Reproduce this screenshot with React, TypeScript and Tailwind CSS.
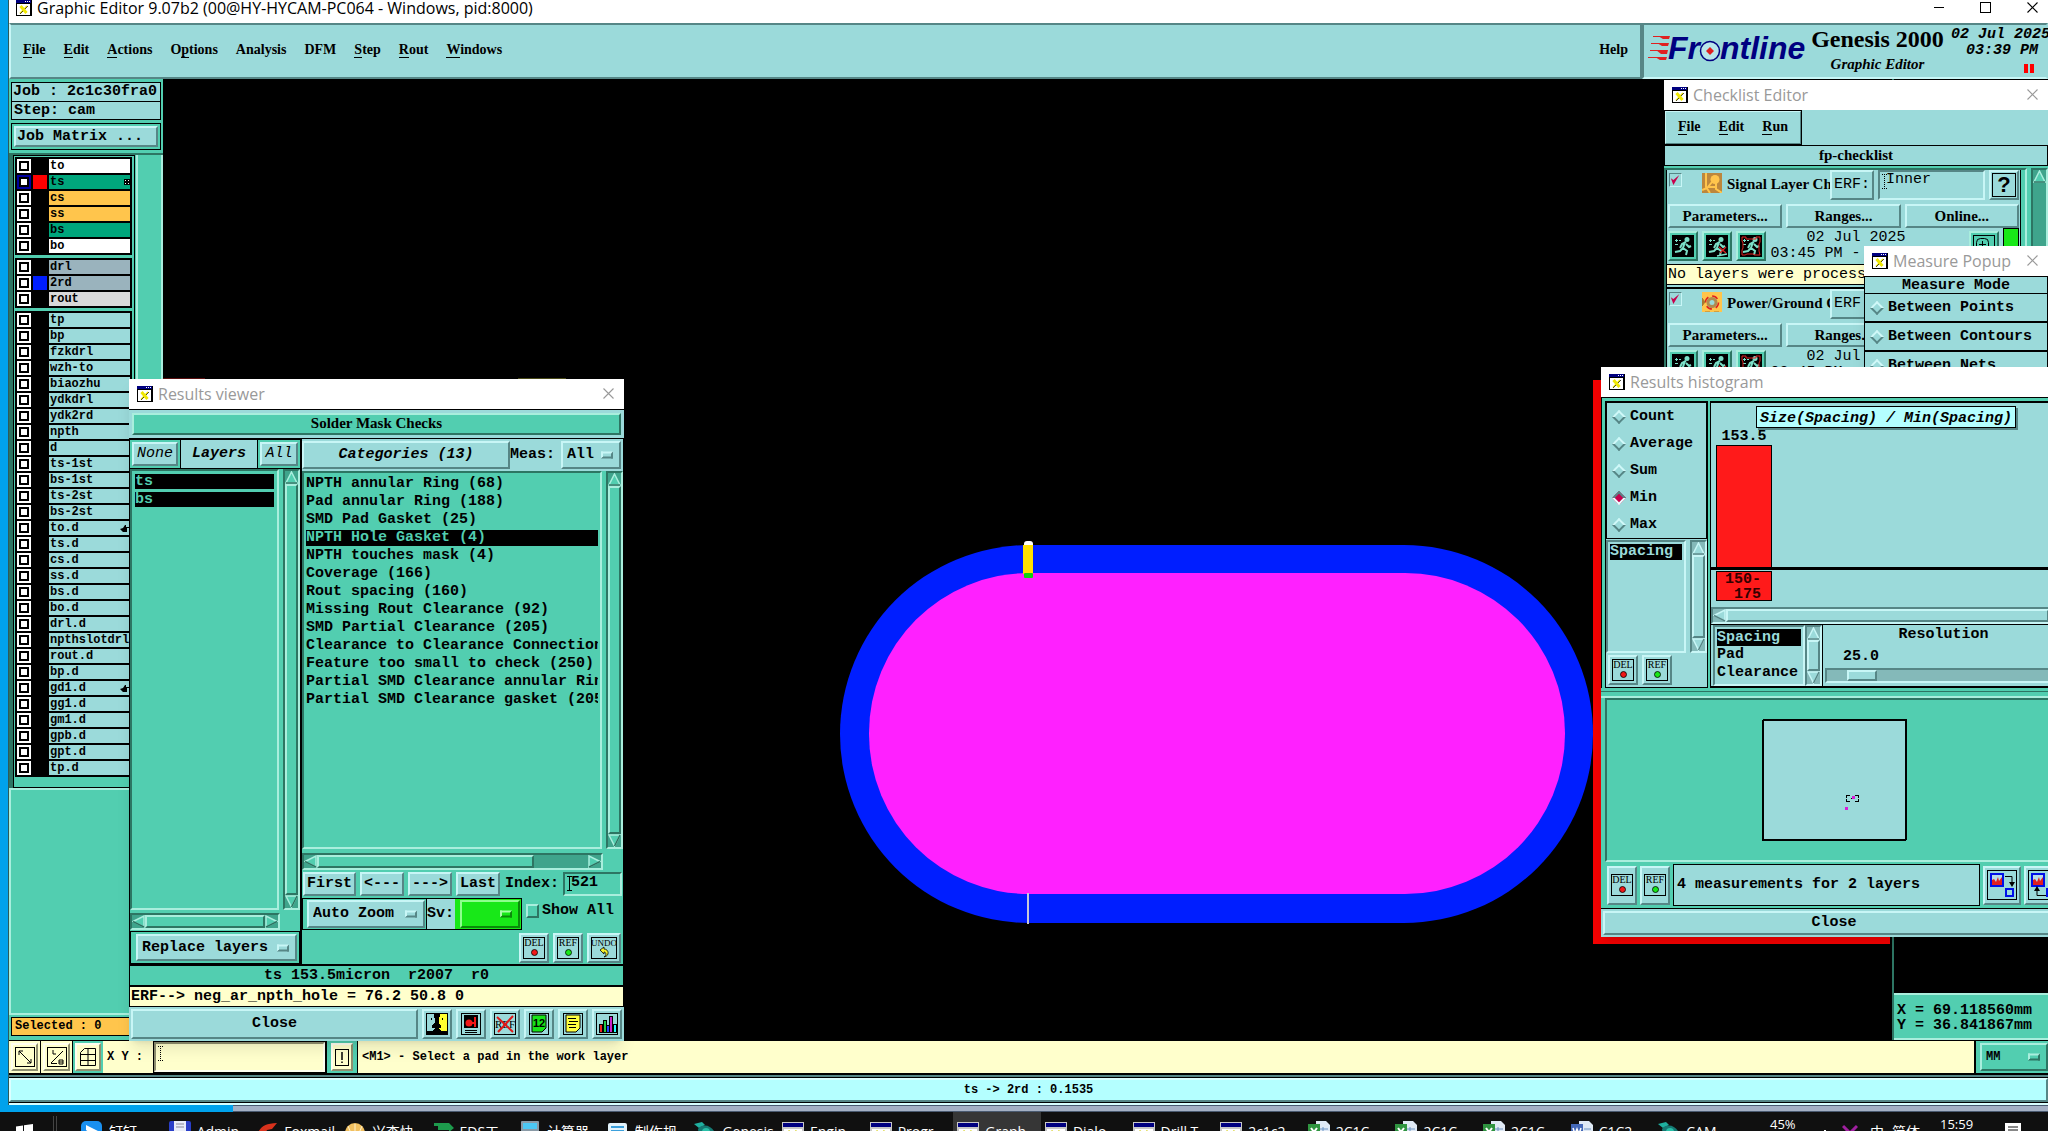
import React, { useState } from 'react';

const MONO = "font-['Liberation_Mono',monospace]";
const SERIF = "font-['Liberation_Serif',serif]";
const SANS = "font-['Open_Sans','Noto_Sans_CJK_SC',sans-serif]";

const raised = 'border-2 border-t-[#c8f6f6] border-l-[#c8f6f6] border-r-[#568686] border-b-[#568686] bg-[#9bdada]';
const sunken = 'border-2 border-t-[#568686] border-l-[#568686] border-r-[#c8f6f6] border-b-[#c8f6f6]';
const raisedTeal = 'border-2 border-t-[#a9eedd] border-l-[#a9eedd] border-r-[#2d7563] border-b-[#2d7563] bg-[#52ceb0]';
const sunkenTeal = 'border-2 border-t-[#2d7563] border-l-[#2d7563] border-r-[#a9eedd] border-b-[#a9eedd] bg-[#52ceb0]';
const raisedCream = 'border-2 border-t-[#fffff0] border-l-[#fffff0] border-r-[#8f8f70] border-b-[#8f8f70] bg-[#ffffcc]';

type Layer = { name: string; bg: string; swatch?: string; active?: boolean; mark?: 'grid' | 'hand' };

const AQUA = 'bg-[#9bdada]';

const boardLayers: Layer[] = [
  { name: 'to', bg: 'bg-white' },
  { name: 'ts', bg: 'bg-[#00a67c]', swatch: 'bg-[#ff0000]', active: true, mark: 'grid' },
  { name: 'cs', bg: 'bg-[#ffc54c]' },
  { name: 'ss', bg: 'bg-[#ffc54c]' },
  { name: 'bs', bg: 'bg-[#00a67c]' },
  { name: 'bo', bg: 'bg-white' },
];

const drillLayers: Layer[] = [
  { name: 'drl', bg: 'bg-[#9ab3bd]' },
  { name: '2rd', bg: 'bg-[#9ab3bd]', swatch: 'bg-[#001eff]' },
  { name: 'rout', bg: 'bg-[#d9d9d9]' },
];

const miscLayers: Layer[] = [
  'tp', 'bp', 'fzkdrl', 'wzh-to', 'biaozhu', 'ydkdrl', 'ydk2rd', 'npth', 'd', 'ts-1st', 'bs-1st', 'ts-2st', 'bs-2st',
  'to.d', 'ts.d', 'cs.d', 'ss.d', 'bs.d', 'bo.d', 'drl.d', 'npthslotdrl', 'rout.d', 'bp.d', 'gd1.d', 'gg1.d', 'gm1.d',
  'gpb.d', 'gpt.d', 'tp.d',
].map((name) => ({ name, bg: AQUA, mark: name === 'to.d' || name === 'gd1.d' ? 'hand' : undefined }));

const categories = [
  'NPTH annular Ring (68)',
  'Pad annular Ring (188)',
  'SMD Pad Gasket (25)',
  'NPTH Hole Gasket (4)',
  'NPTH touches mask (4)',
  'Coverage (166)',
  'Rout spacing (160)',
  'Missing Rout Clearance (92)',
  'SMD Partial Clearance (205)',
  'Clearance to Clearance Connection',
  'Feature too small to check (250)',
  'Partial SMD Clearance annular Ring',
  'Partial SMD Clearance gasket (205)',
];

/* ---------- icons ---------- */

const XIcon = () => (
  <svg width="16" height="16" viewBox="0 0 16 16" className="shrink-0">
    <rect width="16" height="16" fill="#000" />
    <rect x="1" y="4" width="13" height="11" fill="#fff" />
    <rect x="0" y="0" width="15" height="3" fill="#000080" />
    <rect x="9" y="1" width="1" height="1" fill="#fff" />
    <rect x="11" y="1" width="1" height="1" fill="#fff" />
    <rect x="13" y="1" width="1" height="1" fill="#fff" />
    <path d="M4.500 6l6 7" stroke="#f0e800" strokeWidth="3" />
    <path d="M11 6l-7 7.500" stroke="#f0e800" strokeWidth="1.500" />
    <path d="M12 6l-3 3M7 11l-3 3" stroke="#222" strokeWidth="0.800" />
  </svg>
);

const CloseX = ({ color = '#999' }: { color?: string }) => (
  <svg width="11" height="11" viewBox="0 0 11 11">
    <path d="M0.5 0.5l10 10M10.5 0.5l-10 10" stroke={color} strokeWidth="1.1" />
  </svg>
);

const StampIcon = ({ label, color }: { label: string; color: string }) => (
  <svg width="22" height="22" viewBox="0 0 22 22">
    <rect x="0.5" y="0.5" width="21" height="21" fill="none" stroke="#000" />
    <text x="11" y="9" textAnchor="middle" fontFamily="Liberation Serif" fontWeight="normal" fontSize="10" fill="#000">{label}</text>
    <circle cx="11.5" cy="15.5" r="3" fill={color} stroke="#000" strokeWidth="0.8" />
  </svg>
);

const UndoIcon = () => (
  <svg width="26" height="22" viewBox="0 0 26 22">
    <rect x="0.5" y="0.5" width="25" height="21" fill="none" stroke="#000" />
    <text x="13" y="9" textAnchor="middle" fontFamily="Liberation Serif" fontSize="9" fill="#000">UNDO</text>
    <path d="M9 13l4-3v2c5 0 6 7 0 8c3-2 2-5 0-5v2z" fill="#f4ee2a" stroke="#000" strokeWidth="0.8" />
  </svg>
);

const FaceIcon = () => (
  <svg width="22" height="22" viewBox="0 0 22 22" shapeRendering="crispEdges">
    <rect x="0.5" y="0.5" width="21" height="21" fill="#9bdada" stroke="#000" />
    <rect x="12" y="1" width="9" height="20" fill="#ffff30" />
    <path d="M8 0h7l-2 6v5l2 2v2h-2l2 3h6v3H1v-3h6l2-3H6v-2l3-4z" fill="#000" />
    <rect x="5" y="5" width="1" height="2" fill="#000" />
    <rect x="16" y="5" width="1" height="2" fill="#000" />
  </svg>
);

const BombIcon = () => (
  <svg width="20" height="22" viewBox="0 0 20 22">
    <rect x="0.5" y="0.5" width="19" height="21" fill="#9bdada" stroke="#000" />
    <rect x="3" y="2" width="14" height="13" fill="#000" />
    <circle cx="8" cy="10" r="3.5" fill="#f01818" />
    <path d="M8 10h6M14 4v10" stroke="#f01818" strokeWidth="2" />
    <path d="M4 17.5h12M4 19.5h12" stroke="#000" />
  </svg>
);

const NoRefIcon = () => (
  <svg width="22" height="22" viewBox="0 0 22 22">
    <rect x="0.5" y="0.5" width="21" height="21" fill="none" stroke="#000" />
    <text x="11" y="15" textAnchor="middle" fontFamily="Liberation Serif" fontSize="11" fill="#000">REF</text>
    <path d="M3 4l16 15M19 3L4 19" stroke="#e01818" strokeWidth="2" />
  </svg>
);

const PagesIcon = () => (
  <svg width="20" height="22" viewBox="0 0 20 22">
    <rect x="0.5" y="0.5" width="19" height="21" fill="#9bdada" stroke="#000" />
    <path d="M3 2h14v13l-4 4H3z" fill="#18e418" stroke="#000" />
    <text x="10" y="14" textAnchor="middle" fontFamily="Liberation Sans" fontWeight="bold" fontSize="11" fill="#000">12</text>
  </svg>
);

const NoteIcon = () => (
  <svg width="20" height="22" viewBox="0 0 20 22">
    <rect x="0.5" y="0.5" width="19" height="21" fill="#9bdada" stroke="#000" />
    <path d="M3 2h14v13l-4 4H3z" fill="#ffff40" stroke="#000" />
    <path d="M5 5.500h8M6 8.500h9M5 11.500h8M6 14.500h7" stroke="#000" />
  </svg>
);

const BarsIcon = () => (
  <svg width="22" height="22" viewBox="0 0 22 22" shapeRendering="crispEdges">
    <rect x="0.5" y="0.5" width="21" height="21" fill="#9bdada" stroke="#000" />
    <rect x="3" y="11" width="3" height="8" fill="#e22" stroke="#000" />
    <rect x="7" y="7" width="3" height="12" fill="#2c4" stroke="#000" />
    <rect x="10" y="12" width="3" height="7" fill="#24f" stroke="#000" />
    <rect x="13" y="3" width="3" height="16" fill="#c2c" stroke="#000" />
    <rect x="17" y="11" width="3" height="8" fill="#2ff" stroke="#000" />
  </svg>
);

const RunnerIcon = ({ variant }: { variant: 'plain' | 'flag' | 'frame' }) => (
  <svg width="22" height="22" viewBox="0 0 22 22">
    <rect width="22" height="22" fill="#000" />
    <circle cx="15" cy="4.500" r="2.500" fill="#7be0c8" />
    <path d="M14 7l-4 2-2 4M13 7l-2 6 4 3-1 4M11 13l-3 3-5 1M14 9l3 3 2-1" stroke="#7be0c8" strokeWidth="2" fill="none" />
    <path d="M3 5.500h3M7 5.500h2M4.500 4v3M3 9.500h3" stroke="#7be0c8" />
    {variant === 'flag' && <path d="M13 12l7 6M20 12l-6 6" stroke="#e02020" strokeWidth="1.200" />}
    {variant === 'flag' && <path d="M11 21l10-2" stroke="#7be0c8" strokeWidth="1.500" />}
    {variant === 'frame' && <path d="M2 2h4v2h10V2h4v5l-1 2v7l1 4h-5l-2-1H7l-2 1H2v-5l1-2V8L2 6z" stroke="#e02020" fill="none" />}
  </svg>
);

const SignalIcon = () => (
  <svg width="20" height="20" viewBox="0 0 20 20" className="shrink-0">
    <rect width="20" height="20" fill="#bd873c" />
    <circle cx="13" cy="6.500" r="4.500" fill="#ffc54c" />
    <path d="M4 0v14l4 6M10 9l-4 5h8M14 10v6l6 4M0 17l5-2" stroke="#ffc54c" strokeWidth="2" fill="none" />
  </svg>
);

const PowerIcon = () => (
  <svg width="20" height="20" viewBox="0 0 20 20" className="shrink-0">
    <rect width="20" height="20" fill="#ffc54c" />
    <circle cx="10" cy="10.500" r="6.500" fill="none" stroke="#e02020" strokeWidth="1.500" strokeDasharray="6 4" />
    <circle cx="10" cy="10.500" r="4" fill="#9bdada" stroke="#b08c50" strokeWidth="3" />
    <path d="M0 6l3 4-3 4zM3 20h5M12 20h5" stroke="#a8782f" fill="#a8782f" />
  </svg>
);

const FrontlineLogo = () => (
  <svg width="160" height="30" viewBox="0 0 160 30" className="shrink-0">
    <path d="M10 3h12l-1 3h-6zM9 10h12l-1 3h-6zM8 17h12l-1 4h-6zM7 24h12l-1 3h-6z" fill="#e02020" />
    <path d="M5 3.500h16M3 10.500h17M2 17.500h17M0 24.500h18" stroke="#e02020" />
    <text x="20" y="26" fontFamily="Liberation Sans" fontWeight="bold" fontStyle="italic" fontSize="32" fill="#000080">Fr</text>
    <circle cx="62" cy="18" r="9.500" fill="#b8e6ea" stroke="#000080" strokeWidth="1.500" />
    <path d="M62 14l4 4-4 4-4-4z" fill="#e02020" />
    <text x="72" y="26" fontFamily="Liberation Sans" fontWeight="bold" fontStyle="italic" fontSize="32" fill="#000080">ntline</text>
  </svg>
);

const SwapIcon = ({ back = false }: { back?: boolean }) => (
  <svg width="30" height="30" viewBox="0 0 30 30">
    <rect x="0.5" y="0.5" width="29" height="29" fill="none" stroke="#000" />
    <rect x="4" y="4" width="12" height="12" fill="#b8dce8" stroke="#0010e8" strokeWidth="2" />
    <path d="M5 15v-5l2-1 2 3 2-5 1 4 3-4v8z" fill="#e02020" />
    <rect x="19" y="19" width="7" height="7" fill="none" stroke="#0010e8" strokeWidth="2" />
    {back ? (
      <>
        <path d="M18 25.500h-9v-6" stroke="#000" fill="none" />
        <path d="M6 21l3-5 3 5z" />
      </>
    ) : (
      <>
        <path d="M18 6.500h7v8" stroke="#000" fill="none" />
        <path d="M22 12l3 5 3-5z" />
      </>
    )}
  </svg>
);

const ZoomIcon = () => (
  <svg width="22" height="22" viewBox="0 0 22 22">
    <rect x="0.500" y="0.500" width="21" height="21" fill="none" stroke="#000" />
    <rect x="3.500" y="3.500" width="12" height="12" rx="4" fill="none" stroke="#000" />
    <path d="M6 9.500h7M9.500 6v7" stroke="#000" />
  </svg>
);

const Caret = ({ dotted = false }: { dotted?: boolean }) => (
  <svg width="5" height="15" viewBox="0 0 5 15" className="pointer-events-none absolute top-1 left-1">
    <path d="M0 0.500h5M0 14.500h5M2.500 0v15" stroke="#000" strokeDasharray={dotted ? '1 1' : undefined} />
  </svg>
);

const ARROWS = {
  up: 'M6.5 1L12 12H1z',
  down: 'M1 1h11L6.5 12z',
  left: 'M1 6.500L12 1v11z',
  right: 'M12 6.500L1 1v11z',
};

const SHADES = {
  up: 'M12 12H1',
  down: 'M12 1L6.500 12',
  left: 'M1 6.500L12 12',
  right: 'M12 6.500L1 12',
};

const Arrow = ({ dir, teal }: { dir: keyof typeof ARROWS; teal?: boolean }) => (
  <svg width="13" height="13" viewBox="0 0 13 13" className="shrink-0">
    <path d={ARROWS[dir]} fill={teal ? '#52ceb0' : '#9bdada'} stroke={teal ? '#a9eedd' : '#c8f6f6'} strokeWidth="1.500" />
    <path d={SHADES[dir]} stroke={teal ? '#2d7563' : '#568686'} strokeWidth="1.500" />
  </svg>
);

/* ---------- widgets ---------- */

const trough = 'border-2 border-t-[#568686] border-l-[#568686] border-r-[#c8f6f6] border-b-[#c8f6f6] bg-[#84b9b9]';
const troughTeal = 'border-2 border-t-[#2d7563] border-l-[#2d7563] border-r-[#a9eedd] border-b-[#a9eedd] bg-[#3fa48c]';

const VScroll = ({ teal = false }: { teal?: boolean }) => (
  <div className={`flex w-[17px] shrink-0 flex-col ${teal ? troughTeal : trough}`}>
    <Arrow dir="up" teal={teal} />
    <div className={`flex-1 ${teal ? raisedTeal : raised}`} />
    <Arrow dir="down" teal={teal} />
  </div>
);

const HScroll = ({ teal = false, thumb = 'flex-1' }: { teal?: boolean; thumb?: string }) => (
  <div className={`flex h-[17px] shrink-0 ${teal ? troughTeal : trough}`}>
    <Arrow dir="left" teal={teal} />
    <div className="flex flex-1">
      <div className={`${thumb} ${teal ? raisedTeal : raised}`} />
    </div>
    <Arrow dir="right" teal={teal} />
  </div>
);

type ComboProps = { label: string; value: string; tone?: 'aqua' | 'teal' | 'green'; className?: string };

const Combo = ({ label, value, tone = 'aqua', className = '' }: ComboProps) => (
  <label className={`relative block ${className}`}>
    <select
      aria-label={label}
      className={`h-full w-full appearance-none pl-1 font-bold outline-none ${
        tone === 'green'
          ? 'border-2 border-t-[#8cff8c] border-l-[#8cff8c] border-r-[#0a8a0a] border-b-[#0a8a0a] bg-[#18e818]'
          : tone === 'teal' ? raisedTeal : raised
      }`}
    >
      <option>{value}</option>
    </select>
    <span className={`pointer-events-none absolute top-1/2 right-2 h-[7px] w-[12px] -translate-y-1/2 ${
      tone === 'green' ? 'border-2 border-t-[#a8ffa8] border-l-[#a8ffa8] border-r-[#0a8a0a] border-b-[#0a8a0a]' : tone === 'teal' ? raisedTeal : raised
    }`} />
  </label>
);

const IconButton = ({ label, className = 'h-[30px] w-[30px]', tone = raised, children }: { label: string; className?: string; tone?: string; children: React.ReactNode }) => (
  <button aria-label={label} className={`flex shrink-0 items-center justify-center ${tone} ${className}`}>
    {children}
  </button>
);

const TitleBar = ({ title, closable = true }: { title: string; closable?: boolean }) => (
  <div className={`flex h-[30px] shrink-0 items-center bg-white pr-[10px] pb-px pl-2 text-[16px] leading-5 font-normal text-[#999] ${SANS}`}>
    <XIcon />
    <span className="ml-[5px] flex-1 whitespace-nowrap">{title}</span>
    {closable && <button aria-label={`Close ${title}`}><CloseX /></button>}
  </div>
);

const DiamondRadio = ({ name, label, defaultChecked = false }: { name: string; label: string; defaultChecked?: boolean }) => (
  <label className="flex flex-1 items-center gap-[6px] pl-[7px] font-bold">
    <input
      type="radio"
      name={name}
      defaultChecked={defaultChecked}
      className="h-[10px] w-[10px] rotate-45 appearance-none border-2 border-t-[#d0f8f8] border-l-[#d0f8f8] border-r-[#568686] border-b-[#568686] checked:border-t-[#568686] checked:border-l-[#568686] checked:border-r-[#e8ffff] checked:border-b-[#e8ffff] checked:bg-[#c8004c]"
    />
    {label}
  </label>
);

const MenuItem = ({ text, hot = 0 }: { text: string; hot?: number }) => (
  <button>
    {hot < 0 ? text : (
      <>
        {text.slice(0, hot)}
        <span className="border-b border-black">{text[hot]}</span>
        {text.slice(hot + 1)}
      </>
    )}
  </button>
);

/* ---------- main window parts ---------- */

const mainMenu: [string, number][] = [
  ['File', 0], ['Edit', 0], ['Actions', 0], ['Options', 1], ['Analysis', -1], ['DFM', -1], ['Step', 0], ['Rout', 0], ['Windows', 0],
];

const Header = () => (
  <header className={`flex h-14 shrink-0 bg-[#9bdada] ${SERIF}`}>
    <nav className="flex flex-1 items-center gap-[18px] border-2 border-t-[#568686] border-l-[#c8f6f6] border-r-[#568686] border-b-[#568686] px-3 pb-[2px] text-[14px] leading-4 font-bold">
      {mainMenu.map(([text, hot]) => <MenuItem key={text} text={text} hot={hot} />)}
      <span className="flex-1" />
      <MenuItem text="Help" hot={-1} />
    </nav>
    <div className="flex w-[406px] shrink-0 items-start border-2 border-t-[#568686] border-l-[#568686] border-r-transparent border-b-[#c8f6f6] pl-1">
      <div className="pt-2"><FrontlineLogo /></div>
      <div className="flex w-[144px] flex-col items-center pt-[2px] whitespace-nowrap">
        <span className="text-[24px] leading-6 font-bold">Genesis 2000</span>
        <span className="mt-[5px] text-[15px] leading-4 font-bold italic">Graphic Editor</span>
      </div>
      <div className={`flex flex-col items-end pt-[2px] pr-2 pl-1 text-[15px] leading-4 font-bold whitespace-nowrap italic ${MONO}`}>
        <span className="-mr-3">02 Jul 2025</span>
        <span>03:39 PM</span>
        <span className="mt-[5px] mr-1 flex gap-[2px]">
          <span className="h-[9px] w-[4px] bg-[#ff0000]" />
          <span className="h-[9px] w-[4px] bg-[#ff0000]" />
        </span>
      </div>
    </div>
  </header>
);

const LayerGroup = ({ layers }: { layers: Layer[] }) => (
  <ul className="flex flex-col gap-[2px] bg-black p-[2px]">
    {layers.map((layer) => (
      <li key={layer.name} className="flex h-[14px] gap-[2px]">
        <label className={`flex w-[14px] items-center justify-center ${layer.active ? 'bg-[#0000a0]' : 'bg-white'}`}>
          <input type="checkbox" aria-label={layer.name} className="h-[10px] w-[10px] appearance-none border-2 border-black bg-white" />
        </label>
        <span className={`w-[14px] ${layer.swatch ?? ''}`} />
        <span className={`flex flex-1 items-center justify-between pl-px ${layer.bg}`}>
          {layer.name}
          {layer.mark === 'grid' && (
            <svg width="6" height="6" viewBox="0 0 6 6" shapeRendering="crispEdges">
              <rect width="6" height="6" />
              <path d="M1 1h1v1H1zM4 1h1v1H4zM1 4h1v1H1zM4 4h1v1H4z" fill="#fff" />
            </svg>
          )}
          {layer.mark === 'hand' && (
            <svg width="10" height="9" viewBox="0 0 10 9">
              <path d="M0 5l3-1 2-3 1 0v2h4v1H7v4H3z" />
            </svg>
          )}
        </span>
      </li>
    ))}
  </ul>
);

const LayerPanel = () => (
  <aside className={`flex w-[154px] shrink-0 flex-col bg-[#52ceb0] font-bold ${MONO}`}>
    <div className="flex flex-col px-[2px] pt-[3px] pb-[3px] text-[15px] leading-[18px]">
      <div className="h-[20px] border border-black bg-[#9bdada] pl-px whitespace-pre">Job : 2c1c30fra0</div>
      <div className="-mt-px h-[19px] border border-black bg-[#9bdada] pl-[2px]">Step: cam</div>
      <div className="mt-[3px] h-[27px] border border-black p-[2px]">
        <button className={`h-full w-full pl-px text-left ${raised}`}>Job Matrix ...</button>
      </div>
    </div>
    <div className="flex flex-col border-t-2 border-[#2d7563] text-[12px] leading-[14px]">
      <div className="flex border-l-4 border-[#2d7563]">
        <div className="flex w-[122px] flex-col gap-[3px] border border-black bg-[#52ceb0] pt-px pr-[2px] pb-[10px] pl-px">
          <LayerGroup layers={boardLayers} />
          <LayerGroup layers={drillLayers} />
          <LayerGroup layers={miscLayers} />
        </div>
        <div className="ml-px flex-1 border-r-2 border-l-2 border-[#a9eedd]" />
      </div>
    </div>
    <div className="flex-1 border-t-2 border-b-2 border-l-2 border-[#a9eedd]" />
    <div className="mx-[2px] mt-[2px] mb-1 h-[19px] border border-black bg-[#ffc54c] pl-[3px] text-[12px] leading-[17px]">Selected : 0</div>
  </aside>
);

const BoardCanvas = () => (
  <div className="flex-1 overflow-hidden bg-black">
    <svg className="h-full w-full" viewBox="163 79 1729 961" preserveAspectRatio="xMidYMid slice">
      <rect x="163" y="378" width="42" height="1" fill="#5a1010" />
      <rect x="518" y="378" width="48" height="1" fill="#4a4a18" />
      <rect x="1593" y="380" width="297" height="564" fill="#f40000" />
      <rect x="840" y="545" width="753" height="378" rx="189" fill="#001eff" />
      <rect x="869" y="573" width="696" height="321" rx="160" fill="#ff20ff" />
      <rect x="1024" y="541" width="9" height="8" rx="3" fill="#fff" />
      <rect x="1023" y="545" width="10" height="29" fill="#ffe000" />
      <rect x="1024" y="573" width="9" height="5" rx="1" fill="#10d010" />
      <rect x="1027" y="893" width="2" height="31" fill="#c8c8d8" />
    </svg>
  </div>
);

const StatusBar = () => (
  <div className={`flex h-[35px] shrink-0 border-t border-b-2 border-black bg-[#ffffcc] text-[12px] font-bold ${MONO}`}>
    <div className="flex items-center border-r border-black px-[2px]">
      <IconButton label="Zoom area" className="h-[28px] w-[27px]" tone={raisedCream}>
        <svg width="20" height="20" viewBox="0 0 20 20"><rect x="0.500" y="0.500" width="19" height="19" fill="none" stroke="#000" /><path d="M4 4l12 12M4 8V4h4M16 12v4h-4" stroke="#000" fill="none" /></svg>
      </IconButton>
    </div>
    <div className="flex items-center border-r border-black px-[2px]">
      <IconButton label="Snap angle" className="h-[28px] w-[27px]" tone={raisedCream}>
        <svg width="20" height="20" viewBox="0 0 20 20"><rect x="0.500" y="0.500" width="19" height="19" fill="none" stroke="#000" /><path d="M4 16L16 4M6 3v4h3M4 16.500h6M12 13h4v4h-4zM12 15h4" stroke="#000" fill="none" /></svg>
      </IconButton>
    </div>
    <div className="flex items-center bg-[#52ceb0] px-[2px]">
      <IconButton label="Grid" className="h-[28px] w-[26px]" tone={raisedCream}>
        <svg width="16" height="18" viewBox="0 0 16 18"><path d="M0.500 4.500l4-4h11v17h-15zM8 0v18M0 6.500h16M0 12.500h16" stroke="#000" fill="none" /></svg>
      </IconButton>
    </div>
    <label className="flex items-center gap-[10px] pl-1 whitespace-pre">
      X Y :
      <span className="relative block h-full w-[173px] border border-black">
        <Caret dotted />
        <input className="h-full w-full border-2 border-t-[#8f8f70] border-l-[#8f8f70] border-r-[#fffff0] border-b-[#fffff0] bg-[#ffffcc] pl-2" />
      </span>
    </label>
    <div className="flex items-center border-r border-l border-black bg-[#52ceb0] px-1">
      <IconButton label="Alert" className="h-[28px] w-[22px]" tone={raisedCream}>
        <svg width="14" height="17" viewBox="0 0 14 17"><rect x="0.500" y="0.500" width="13" height="16" fill="none" stroke="#000" /><path d="M7 3v8M7 12.500v1.500" stroke="#000" strokeWidth="1.500" /></svg>
      </IconButton>
    </div>
    <div className="flex flex-1 items-center pl-1 whitespace-pre">{'<M1> - Select a pad in the work layer'}</div>
    <div className="flex w-[74px] items-center border-l-2 border-black bg-[#52ceb0] py-[2px] pl-1">
      <Combo label="Units" value="MM" tone="teal" className="h-full w-full" />
    </div>
  </div>
);

/* ---------- popup windows ---------- */

const ResultsViewer = () => {
  const [selected, setSelected] = useState(3);

  return (
    <section className={`absolute top-[379px] left-[129px] flex w-[495px] flex-col bg-black text-[15px] leading-[18px] shadow-lg ${MONO}`}>
      <TitleBar title="Results viewer" />
      <h2 className={`mt-px h-7 bg-[#9bdada] p-[3px] text-center text-[15px] leading-[17px] font-bold ${SERIF}`}>
        <span className={`block h-full ${raisedTeal}`}>Solder Mask Checks</span>
      </h2>

      <div className="mt-px flex h-[525px] gap-[2px] px-px">
        {/* Layers column */}
        <div className="flex w-[170px] flex-col bg-[#52ceb0]">
          <div className="flex h-[30px] gap-px bg-black py-px">
            <div className="bg-[#52ceb0] p-[2px]">
              <button className={`h-full w-[46px] text-center italic ${raised}`}>None</button>
            </div>
            <div className="flex flex-1 items-center justify-center bg-[#9bdada] font-bold italic">Layers</div>
            <div className="bg-[#52ceb0] p-[2px]">
              <button className={`h-full w-[38px] italic ${raised}`}>All</button>
            </div>
          </div>
          <div className="flex flex-1 gap-1">
            <ul className={`flex flex-1 flex-col gap-[3px] p-[3px] font-bold ${sunkenTeal}`}>
              <li className="h-[15px] bg-black leading-[15px] text-[#52ceb0]">ts</li>
              <li className="h-[15px] bg-black leading-[15px] text-[#52ceb0]">bs</li>
            </ul>
            <VScroll teal />
          </div>
          <div className="mt-[3px] mr-5 mb-px flex flex-col"><HScroll teal /></div>
          <div className="h-[33px] border border-black bg-[#52ceb0] p-[2px] pl-[5px]">
            <Combo label="Layer mode" value="Replace layers" className="h-full" />
          </div>
        </div>

        {/* Categories column */}
        <div className="flex min-w-0 flex-1 flex-col bg-[#52ceb0]">
          <div className="flex h-[32px] items-center bg-[#9bdada] py-[2px] pr-[2px]">
            <button className={`h-full w-[208px] font-bold italic ${raised}`}>Categories (13)</button>
            <span className="flex-1 font-bold">Meas:</span>
            <Combo label="Meas" value="All" className="h-full w-[60px]" />
          </div>
          <div className="flex flex-1 gap-1">
            <ul className={`min-w-0 flex-1 p-[2px] font-bold ${sunkenTeal}`}>
              {categories.map((category, index) => (
                <li key={category} className="h-[18px] py-px">
                  <button
                    className={`block h-4 w-full overflow-hidden text-left leading-4 whitespace-pre ${selected === index ? 'bg-black text-[#52ceb0]' : ''}`}
                    onClick={() => setSelected(index)}
                  >
                    {category}
                  </button>
                </li>
              ))}
            </ul>
            <VScroll teal />
          </div>
          <div className="mt-1 mr-5 flex flex-col"><HScroll teal thumb="w-4/5" /></div>
          <div className="flex h-[28px] items-center gap-1 px-px font-bold">
            <button className={`h-[24px] w-[53px] leading-[18px] ${raised}`}>First</button>
            <button className={`h-[24px] w-[44px] leading-[18px] ${raised}`}>&lt;---</button>
            <button className={`h-[24px] w-[44px] leading-[18px] ${raised}`}>---&gt;</button>
            <button className={`h-[24px] w-[44px] leading-[18px] ${raised}`}>Last</button>
            <label className="flex flex-1 items-center gap-1 pl-px">
              Index:
              <span className="relative block flex-1">
                <Caret />
                <input defaultValue="521" className={`h-[24px] w-full pb-1 pl-[6px] font-bold ${sunkenTeal}`} />
              </span>
            </label>
          </div>
          <div className="flex h-[33px] items-start">
            <div className="flex h-[32px] w-[220px] items-stretch border border-black">
              <Combo label="Zoom mode" value="Auto Zoom" className="my-px mr-px ml-1 w-[118px]" />
              <span className="border-l border-black bg-[#9bdada] pr-px leading-[30px] font-bold">Sv:</span>
              <div className="flex-1 bg-[#18e818] p-px pl-[5px]">
                <Combo label="Severity" value="" tone="green" className="h-full" />
              </div>
            </div>
            <label className="flex items-center gap-[3px] pt-1 pl-1 leading-[18px] font-bold">
              <input type="checkbox" className={`h-[14px] w-[13px] appearance-none ${raisedTeal}`} />
              Show All
            </label>
          </div>
          <div className="flex h-[33px] items-center justify-end gap-1 px-[2px]">
            <IconButton label="Delete"><StampIcon label="DEL" color="#f01818" /></IconButton>
            <IconButton label="Refresh"><StampIcon label="REF" color="#18e818" /></IconButton>
            <IconButton label="Undo" className="h-[30px] w-[34px]"><UndoIcon /></IconButton>
          </div>
        </div>
      </div>

      <p className="mx-px mt-[2px] h-[19px] bg-[#52ceb0] text-center leading-5 font-bold whitespace-pre">ts 153.5micron  r2007  r0</p>
      <p className="mx-px mt-[2px] h-[19px] bg-[#ffffcc] pl-px leading-5 font-bold whitespace-pre">{'ERF--> neg_ar_npth_hole = 76.2 50.8 0'}</p>
      <div className="mt-px flex h-[34px] items-center gap-1 bg-[#9bdada] px-[2px]">
        <button className={`h-[30px] flex-1 font-bold ${raised}`}>Close</button>
        <IconButton label="Contrast"><FaceIcon /></IconButton>
        <IconButton label="Disk"><BombIcon /></IconButton>
        <IconButton label="Clear references"><NoRefIcon /></IconButton>
        <IconButton label="Numbers"><PagesIcon /></IconButton>
        <IconButton label="Notes"><NoteIcon /></IconButton>
        <IconButton label="Histogram"><BarsIcon /></IconButton>
      </div>
    </section>
  );
};

const CheckItem = ({ name, icon }: { name: string; icon: React.ReactNode }) => (
  <div className="flex h-[119px] flex-col border-b-2 border-l border-black bg-[#9bdada]">
    <div className="flex h-[31px] items-start pl-[2px]">
      <label className="mt-[3px] mr-5">
        <input type="checkbox" defaultChecked aria-label={name} className="peer sr-only" />
        <svg width="13" height="14" viewBox="0 0 13 14" className="border border-t-[#568686] border-l-[#568686] border-r-[#c8f6f6] border-b-[#c8f6f6]">
          <path d="M1 5l3 2 7-6-7 12z" fill="#c8004c" />
        </svg>
      </label>
      <div className="mt-[3px] shrink-0">{icon}</div>
      <span className={`mt-[5px] ml-[5px] w-[103px] shrink-0 overflow-hidden text-[15px] leading-[18px] font-bold whitespace-nowrap ${SERIF}`}>{name}</span>
      <button className={`h-[30px] w-[44px] shrink-0 ${raised}`}>ERF:</button>
      <span className="relative ml-1 block h-[30px] flex-1">
        <Caret dotted />
        <input aria-label="ERF model" defaultValue="Inner" className={`h-full w-full pb-3 pl-[6px] ${sunken}`} />
      </span>
      <button className={`mr-px ml-1 flex h-[30px] w-[30px] shrink-0 items-center justify-center ${raised}`}>
        <span className="h-[24px] w-[24px] border border-black text-center font-['Liberation_Sans',sans-serif] text-[22px] leading-[22px] font-bold">?</span>
      </button>
    </div>
    <div className={`flex h-[27px] items-end gap-1 px-px text-[15px] leading-[18px] font-bold ${SERIF}`}>
      <button className={`h-[24px] flex-1 ${raised}`}>Parameters...</button>
      <button className={`h-[24px] flex-1 ${raised}`}>Ranges...</button>
      <button className={`h-[24px] flex-1 ${raised}`}>Online...</button>
    </div>
    <div className="flex h-[36px] items-center gap-1 px-px">
      <IconButton label="Run all" tone={raisedTeal}><RunnerIcon variant="plain" /></IconButton>
      <IconButton label="Run area" tone={raisedTeal}><RunnerIcon variant="flag" /></IconButton>
      <IconButton label="Run inside" tone={raisedTeal}><RunnerIcon variant="frame" /></IconButton>
      <p className="w-[172px] shrink-0 text-center leading-4">02 Jul 2025<br />03:45 PM - 03:45 PM</p>
      <span className="flex-1" />
      <IconButton label="Zoom to result" tone={raisedTeal}><ZoomIcon /></IconButton>
      <span className="mb-2 h-[28px] w-[16px] shrink-0 border border-black bg-[#18e818]" />
    </div>
    <p className="h-[21px] overflow-hidden border-t border-b border-black bg-[#ffffcc] pl-px leading-[19px] whitespace-nowrap">No layers were processed</p>
  </div>
);

const ChecklistEditor = () => (
  <section className={`absolute top-[80px] right-0 flex h-[420px] w-[384px] flex-col bg-[#9bdada] text-[15px] leading-[18px] shadow-lg ${MONO}`}>
    <TitleBar title="Checklist Editor" />
    <div className={`flex h-[35px] w-[138px] items-center gap-[18px] px-3 pb-px text-[14px] leading-4 font-bold outline outline-1 -outline-offset-1 outline-black ${SERIF} ${raised}`}>
      <MenuItem text="File" />
      <MenuItem text="Edit" />
      <MenuItem text="Run" />
    </div>
    <h2 className={`h-[21px] border border-black text-center text-[15px] leading-[18px] font-bold ${SERIF}`}>fp-checklist</h2>
    <div className="flex flex-1 overflow-hidden bg-[#52ceb0]">
      <div className="mt-[2px] flex-1 overflow-hidden border-2 border-t-[#2d7563] border-l-[#2d7563] border-r-[#a9eedd] border-b-[#a9eedd] pr-1">
        <div className="flex flex-col border-r border-black">
          <CheckItem name="Signal Layer Ch" icon={<SignalIcon />} />
          <CheckItem name="Power/Ground Ch" icon={<PowerIcon />} />
        </div>
      </div>
      <div className={`mt-[2px] ml-1 flex w-[17px] flex-col ${troughTeal}`}>
        <Arrow dir="up" teal />
      </div>
    </div>
  </section>
);

const MeasurePopup = () => (
  <section className={`absolute top-[246px] right-0 flex w-[184px] flex-col bg-black text-[15px] leading-[18px] shadow-lg ${MONO}`}>
    <TitleBar title="Measure Popup" />
    <h2 className="mx-px mt-px h-[16px] bg-[#9bdada] text-center leading-[18px] font-bold">Measure Mode</h2>
    <div className="mx-px mt-px flex flex-col gap-[2px]">
      {['Between Points', 'Between Contours', 'Between Nets'].map((mode) => (
        <div key={mode} className="flex h-[27px] items-center bg-[#9bdada]">
          <DiamondRadio name="measure" label={mode} />
        </div>
      ))}
    </div>
  </section>
);

const HistogramWindow = () => (
  <section className={`absolute top-[367px] -right-[19px] flex w-[466px] flex-col bg-[#52ceb0] text-[15px] leading-[18px] font-bold shadow-lg ${MONO}`}>
    <TitleBar title="Results histogram" closable={false} />

    <div className="flex h-[291px] gap-[2px] border-t border-l border-black px-[3px] pt-[3px]">
      <div className="flex w-[103px] flex-col border border-black bg-[#9bdada]">
        <div role="radiogroup" aria-label="Statistic" className="flex h-[137px] flex-col border border-black pt-px">
          <DiamondRadio name="stat" label="Count" />
          <DiamondRadio name="stat" label="Average" />
          <DiamondRadio name="stat" label="Sum" />
          <DiamondRadio name="stat" label="Min" defaultChecked />
          <DiamondRadio name="stat" label="Max" />
        </div>
        <div className="flex flex-1 gap-1 pt-px">
          <ul className={`flex-1 p-[2px] ${sunken}`}>
            <li className="h-[16px] bg-black leading-4 text-[#9bdada]">Spacing</li>
          </ul>
          <VScroll />
        </div>
        <div className="flex gap-1 p-[2px]">
          <IconButton label="Delete bin"><StampIcon label="DEL" color="#f01818" /></IconButton>
          <IconButton label="Refresh bin"><StampIcon label="REF" color="#18e818" /></IconButton>
        </div>
      </div>

      <div className="flex min-w-0 flex-1 flex-col border-l border-black bg-[#9bdada]">
        <div className="flex h-[169px] flex-col border-t-2 border-b-3 border-black">
          <div className="mt-[3px] mr-12 flex h-[22px] self-end border border-black bg-[#b4ffff] px-[3px] leading-6 italic shadow-[2px_2px_0_#568686]">
            Size(Spacing) / Min(Spacing)
          </div>
          <div className="ml-[5px] flex w-[56px] flex-1 flex-col">
            <span className="text-center leading-[17px]">153.5</span>
            <span className="flex-1 border border-b-0 border-black bg-[#ff1a1a]" />
          </div>
        </div>
        <div className="mt-px ml-[5px] h-[30px] w-[56px] border border-black bg-[#ff1a1a] pr-[10px] text-right leading-[15px] text-[#300]">150-<br />175</div>
        <div className="mt-[6px] flex flex-col border-b border-black"><HScroll /></div>
        <div className="flex h-[61px] pl-[2px]">
          <ul className={`w-[92px] p-[2px] ${sunken}`}>
            <li className="h-[17px] bg-black leading-[17px] text-[#9bdada]">Spacing</li>
            <li>Pad</li>
            <li>Clearance</li>
          </ul>
          <VScroll />
          <div className="flex flex-1 flex-col border-l border-black pt-px">
            <label htmlFor="resolution" className="text-center">Resolution</label>
            <span className="pt-1 pl-5">25.0</span>
            <input
              id="resolution"
              type="range"
              min={0}
              max={100}
              defaultValue={10}
              className={`mx-[2px] mt-[2px] h-[15px] appearance-none bg-[#84b9b9] [&::-webkit-slider-thumb]:h-[11px] [&::-webkit-slider-thumb]:w-[30px] [&::-webkit-slider-thumb]:appearance-none [&::-webkit-slider-thumb]:border-2 [&::-webkit-slider-thumb]:border-t-[#c8f6f6] [&::-webkit-slider-thumb]:border-l-[#c8f6f6] [&::-webkit-slider-thumb]:border-r-[#568686] [&::-webkit-slider-thumb]:border-b-[#568686] [&::-webkit-slider-thumb]:bg-[#9bdada] ${sunken}`}
            />
          </div>
        </div>
        <div className="flex-1 border-t-2 border-black bg-[#52ceb0]" />
      </div>
    </div>

    <div className="mt-[3px] h-[7px] border-t border-b-2 border-t-[#2d7563] border-b-[#a9eedd]" />
    <div className="mx-1 flex h-[164px] items-center justify-center border-2 border-t-[#2d7563] border-l-[#2d7563] border-r-[#a9eedd] border-b-[#a9eedd]">
      <svg width="145" height="122" viewBox="0 0 145 122" shapeRendering="crispEdges">
        <rect x="1" y="1" width="143" height="120" rx="1" fill="#9bdada" stroke="#000" strokeWidth="2" />
        <path d="M88 76.500h-3.500v2M84.500 80v2.500h3.500M93 76.500h3.500v2M96.500 80v2.500h-3.500M89 79.500h4" stroke="#000" fill="none" />
        <rect x="90" y="77" width="3" height="3" fill="#d81cd8" />
        <rect x="83" y="88" width="3" height="3" fill="#d81cd8" />
      </svg>
    </div>
    <div className="flex h-[46px] items-center gap-[3px] pl-[6px]">
      <IconButton label="Delete measurement" className="h-[39px] w-[30px]"><StampIcon label="DEL" color="#f01818" /></IconButton>
      <IconButton label="Refresh measurement" className="h-[39px] w-[30px]"><StampIcon label="REF" color="#18e818" /></IconButton>
      <p className="h-[42px] w-[307px] shrink-0 border border-black bg-[#9bdada] pl-[3px] leading-10">4 measurements for 2 layers</p>
      <IconButton label="Copy graph" className="h-[39px] w-[38px]"><SwapIcon /></IconButton>
      <IconButton label="Paste graph" className="h-[39px] w-[38px]"><SwapIcon back /></IconButton>
    </div>
    <div className="border-t border-black bg-[#9bdada] p-[2px]">
      <button className={`h-[24px] w-full leading-5 ${raised}`}>Close</button>
    </div>
  </section>
);

/* ---------- taskbar ---------- */

type Task = { label: string; kind: string; active?: boolean };

const tasks: Task[] = [
  { label: '钉钉', kind: 'bird' },
  { label: 'Admin...', kind: 'disk' },
  { label: 'Foxmail', kind: 'fox' },
  { label: '兴查快', kind: 'shell' },
  { label: 'EDS工', kind: 'eds' },
  { label: '计算器', kind: 'calc' },
  { label: '制作规', kind: 'notepad' },
  { label: 'Genesis', kind: 'genesis' },
  { label: 'Engin', kind: 'x' },
  { label: 'Progr', kind: 'x' },
  { label: 'Graph', kind: 'x', active: true },
  { label: 'Dialo', kind: 'x' },
  { label: 'Drill T', kind: 'x' },
  { label: '2c1c2', kind: 'x' },
  { label: '2C1C', kind: 'excel' },
  { label: '2C1C', kind: 'excel' },
  { label: '2C1C', kind: 'excel' },
  { label: 'C1C2', kind: 'word' },
  { label: 'CAM', kind: 'genesis' },
];

const TaskIcon = ({ kind }: { kind: string }) => (
  <svg width="22" height="22" viewBox="0 0 22 22" className="shrink-0">
    {kind === 'bird' && <><rect width="21" height="22" rx="5" fill="#1a90f0" /><path d="M5 4l12 6-4 2 1 3-4 5 1-5-3-1 2-1-5-4z" fill="#fff" /></>}
    {kind === 'disk' && <><rect width="22" height="22" rx="2" fill="#2a3fc8" /><rect x="5" width="12" height="10" fill="#e8ecf8" /><path d="M7 3h8M7 6h8" stroke="#889" /></>}
    {kind === 'fox' && <path d="M1 13C6 4 9 3 21 2l-5 6-5 1-3 6-7 4z" fill="#d8321c" />}
    {kind === 'shell' && <><circle cx="11" cy="12" r="10" fill="#f2c060" /><path d="M11 22V3M11 22L4 5M11 22L18 5" stroke="#fff2cc" /></>}
    {kind === 'eds' && <><path d="M2 2h15l5 5-5 4v-2H6V5H2z" fill="#1d9a4c" /><path d="M2 12h14v3H2z" fill="#1d9a4c" /></>}
    {kind === 'calc' && <><rect x="2" width="18" height="22" rx="1" fill="#8a9aa6" /><rect x="4" y="2" width="14" height="6" fill="#4cc8f4" /><path d="M5 12h3M10 12h3M15 12h3" stroke="#fff" strokeWidth="2" /></>}
    {kind === 'notepad' && <><rect x="1" y="2" width="19" height="20" rx="2" fill="#e4f4fc" /><path d="M4 6h13M4 10h13" stroke="#3ca0dc" strokeWidth="2" /></>}
    {kind === 'genesis' && <><path d="M0 3l8-2 3 3-6 3z" fill="#1fb0a0" /><path d="M4 8c4-6 14-4 17 4l-4 10H6z" fill="#157a74" /><circle cx="12" cy="11" r="4" fill="#28c0a8" /></>}
    {kind === 'x' && <><rect y="1" width="22" height="21" fill="#c8c8c8" /><rect x="1" y="2" width="20" height="4" fill="#000080" /><rect x="2" y="8" width="18" height="14" fill="#fff" /><path d="M6 10l9 11M15 10L6 21" stroke="#d0c800" strokeWidth="3" /></>}
    {kind === 'excel' && <><path d="M8 0h10l4 4v18H8z" fill="#dfe9f5" /><path d="M11 8h9M11 12h9M15 6v12" stroke="#6c94c4" /><rect y="3" width="12" height="16" fill="#2f9440" /><path d="M3 7l6 8M9 7l-6 8" stroke="#fff" strokeWidth="2" /></>}
    {kind === 'word' && <><path d="M8 0h10l4 4v18H8z" fill="#dfe9f5" /><path d="M13 8h7M13 11h7M13 14h7" stroke="#6c94c4" /><rect y="3" width="12" height="16" fill="#4468b8" /><path d="M2 7l2 6 2-5 2 5 2-6" stroke="#fff" fill="none" strokeWidth="1.500" /></>}
  </svg>
);

const Taskbar = () => (
  <footer className={`h-[19px] shrink-0 overflow-hidden bg-[#101010] text-[14px] leading-5 text-white ${SANS}`}>
    <div className="flex h-10 items-center">
      <button aria-label="Start" className="ml-4 w-[37px]">
        <svg width="17" height="17" viewBox="0 0 17 17"><path d="M0 2.500l7-1V8H0zM8 1.300L17 0v8H8zM0 9h7v6.500l-7-1zM8 9h9v8l-9-1.300z" fill="#fff" /></svg>
      </button>
      <span className="mr-5 h-8 w-[4px] border-r border-l border-[#444]" />
      <div className="flex flex-1">
        {tasks.map((task, index) => (
          <button key={index} className={`flex h-10 min-w-0 flex-1 items-center gap-[6px] overflow-hidden pl-1 whitespace-nowrap ${task.active ? 'bg-[#363636]' : ''}`}>
            <TaskIcon kind={task.kind} />
            <span className="w-[54px] overflow-hidden text-left">{task.label}</span>
          </button>
        ))}
      </div>
      <div className="flex w-[306px] shrink-0 items-center">
        <span className="ml-[28px] h-9 w-[50px] text-[13px] leading-5">45%</span>
        <svg width="10" height="6" viewBox="0 0 10 6"><path d="M1 5l4-4 4 4" stroke="#fff" fill="none" /></svg>
        <svg width="16" height="20" viewBox="0 0 16 20" className="ml-3"><path d="M1 4l14 14M15 4L1 18" stroke="#a020a0" strokeWidth="3" /></svg>
        <span className="ml-3">中</span>
        <span className="ml-2">简体</span>
        <span className="ml-5 h-9 text-[13px] leading-5">15:59</span>
        <svg width="16" height="18" viewBox="0 0 16 18" className="ml-8"><path d="M0 0h16v14h-5l-3 4v-4H0z" fill="#fff" /><path d="M3 4h10M3 7h10M3 10h10" stroke="#101010" /></svg>
      </div>
    </div>
  </footer>
);

const App: React.FC = () => {
  return (
    <div className="relative flex h-screen w-full flex-col overflow-hidden bg-[#00a2ec] text-black">
      <main className="ml-2 flex flex-1 flex-col border-l border-[#2d5a5a]">
        <div className={`flex h-[23px] shrink-0 items-start bg-white text-[16px] leading-4 ${SANS}`}>
          <div className="ml-[7px]"><XIcon /></div>
          <h1 className="ml-[5px] flex-1 whitespace-nowrap">Graphic Editor 9.07b2 (00@HY-HYCAM-PC064 - Windows, pid:8000)</h1>
          <button aria-label="Minimize" className="mt-[7px] mr-9 h-px w-[10px] bg-black" />
          <button aria-label="Maximize" className="mt-[2px] mr-9 h-[11px] w-[11px] border border-black" />
          <button aria-label="Close" className="mt-[2px] mr-[10px]"><CloseX color="#000" /></button>
        </div>
        <Header />
        <div className="flex flex-1">
          <LayerPanel />
          <BoardCanvas />
          <div className={`flex w-[156px] shrink-0 flex-col border-l-2 border-[#2d7563] bg-black text-[15px] leading-[15px] font-bold ${MONO}`}>
            <div className="flex-1" />
            <div className="h-[47px] border-t-2 border-b-2 border-[#a9eedd] bg-[#52ceb0] pt-2 pl-[3px] whitespace-pre">
              X = 69.118560mm<br />Y = 36.841867mm
            </div>
          </div>
        </div>
        <StatusBar />
        <p className={`h-[30px] shrink-0 border-t-2 border-b-2 border-t-[#568686] border-b-[#d8ffff] bg-black text-center text-[12px] leading-[20px] font-bold ${MONO}`}>
          <span className="my-px block border-2 border-t-[#dcffff] border-l-[#dcffff] border-r-[#568686] border-b-[#568686] bg-[#b4ffff]">{'ts -> 2rd : 0.1535'}</span>
        </p>
      </main>
      <div className="ml-[233px] h-[7px] shrink-0 border-t border-b border-[#4a5a70] bg-[#a4b0c4]" />
      <Taskbar />

      <ChecklistEditor />
      <MeasurePopup />
      <HistogramWindow />
      <ResultsViewer />
    </div>
  );
};

export default App;
